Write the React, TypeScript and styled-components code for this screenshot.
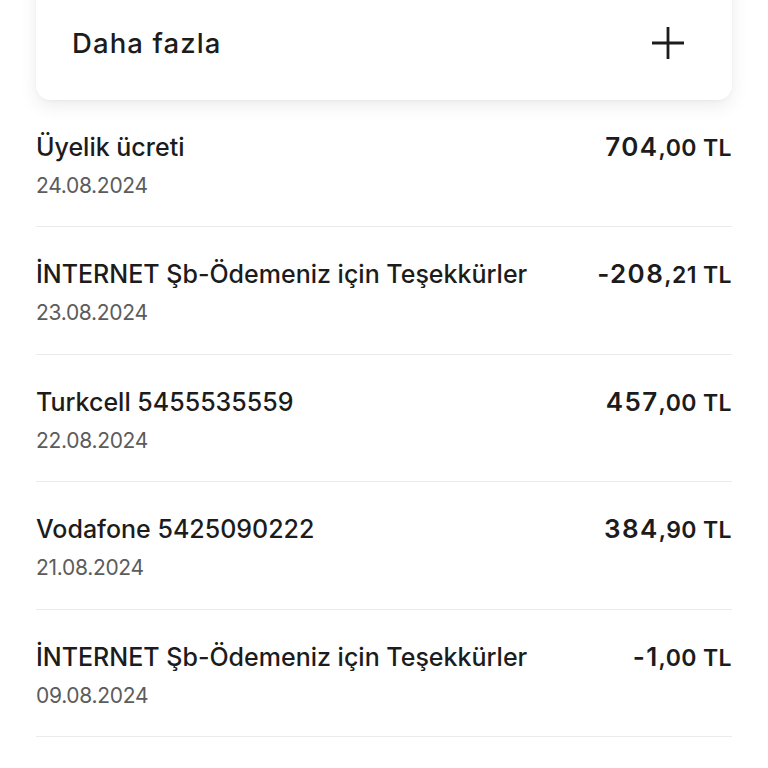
import React from "react"
import styled, { createGlobalStyle } from "styled-components"

const GlobalStyle = createGlobalStyle`
  html, body {
    margin: 0;
    padding: 0;
    background: #ffffff;
    font-family: Inter, "Noto Sans", sans-serif;
    color: #1c1c1c;
  }
`

const Page = styled.div`
  width: 768px;
  height: 768px;
  overflow: hidden;
  padding: 0 36px;
  box-sizing: border-box;
`

const MoreCard = styled.div`
  margin-top: -40px;
  height: 139.5px;
  box-sizing: border-box;
  padding: 40px 48px 14px 36px;
  background: #fff;
  border-radius: 0 0 14px 14px;
  box-shadow: 0 6px 18px rgba(0, 0, 0, 0.08), 0 1px 3px rgba(0, 0, 0, 0.04);
  display: flex;
  align-items: center;
  justify-content: space-between;
`

const MoreLabel = styled.span`
  font-size: 27.5px;
  font-weight: 500;
  letter-spacing: 1.1px;
`

const PlusIcon = styled.svg`
  width: 32px;
  height: 32px;
`

const List = styled.div`
  display: flex;
  flex-direction: column;
`

const Row = styled.div`
  height: 127.5px;
  box-sizing: border-box;
  border-bottom: 1.5px solid #ebebeb;
  display: flex;
  justify-content: space-between;
  align-items: flex-start;
  padding-top: 32px;
`

const Info = styled.div`
  display: flex;
  flex-direction: column;
  gap: 11px;
`

const Title = styled.div`
  font-size: 25px;
  font-weight: 500;
  line-height: 30px;
`

const DateText = styled.div`
  font-size: 21px;
  line-height: 26px;
  color: #5c5c5c;
  letter-spacing: -0.3px;
`

const Amount = styled.div`
  font-weight: 600;
  line-height: 30px;
  white-space: nowrap;
`

const Whole = styled.span`
  font-size: 26px;
  letter-spacing: 1.4px;
`

const Fraction = styled.span`
  font-size: 23px;
  letter-spacing: 0.4px;
`

type Tx = { title: string; date: string; whole: string; fraction: string }

const items: Tx[] = [
  { title: "Üyelik ücreti", date: "24.08.2024", whole: "704", fraction: ",00 TL" },
  { title: "İNTERNET Şb-Ödemeniz için Teşekkürler", date: "23.08.2024", whole: "-208", fraction: ",21 TL" },
  { title: "Turkcell 5455535559", date: "22.08.2024", whole: "457", fraction: ",00 TL" },
  { title: "Vodafone 5425090222", date: "21.08.2024", whole: "384", fraction: ",90 TL" },
  { title: "İNTERNET Şb-Ödemeniz için Teşekkürler", date: "09.08.2024", whole: "-1", fraction: ",00 TL" },
]

export default function App() {
  return (
    <>
      <GlobalStyle />
      <Page>
        <MoreCard>
          <MoreLabel>Daha fazla</MoreLabel>
          <PlusIcon viewBox="0 0 32 32" fill="none" stroke="#1c1c1c" strokeWidth="2.8">
            <path d="M0 16h32M16 0v32" />
          </PlusIcon>
        </MoreCard>
        <List>
          {items.map((t, i) => (
            <Row key={i}>
              <Info>
                <Title>{t.title}</Title>
                <DateText>{t.date}</DateText>
              </Info>
              <Amount>
                <Whole>{t.whole}</Whole>
                <Fraction>{t.fraction}</Fraction>
              </Amount>
            </Row>
          ))}
        </List>
      </Page>
    </>
  )
}
